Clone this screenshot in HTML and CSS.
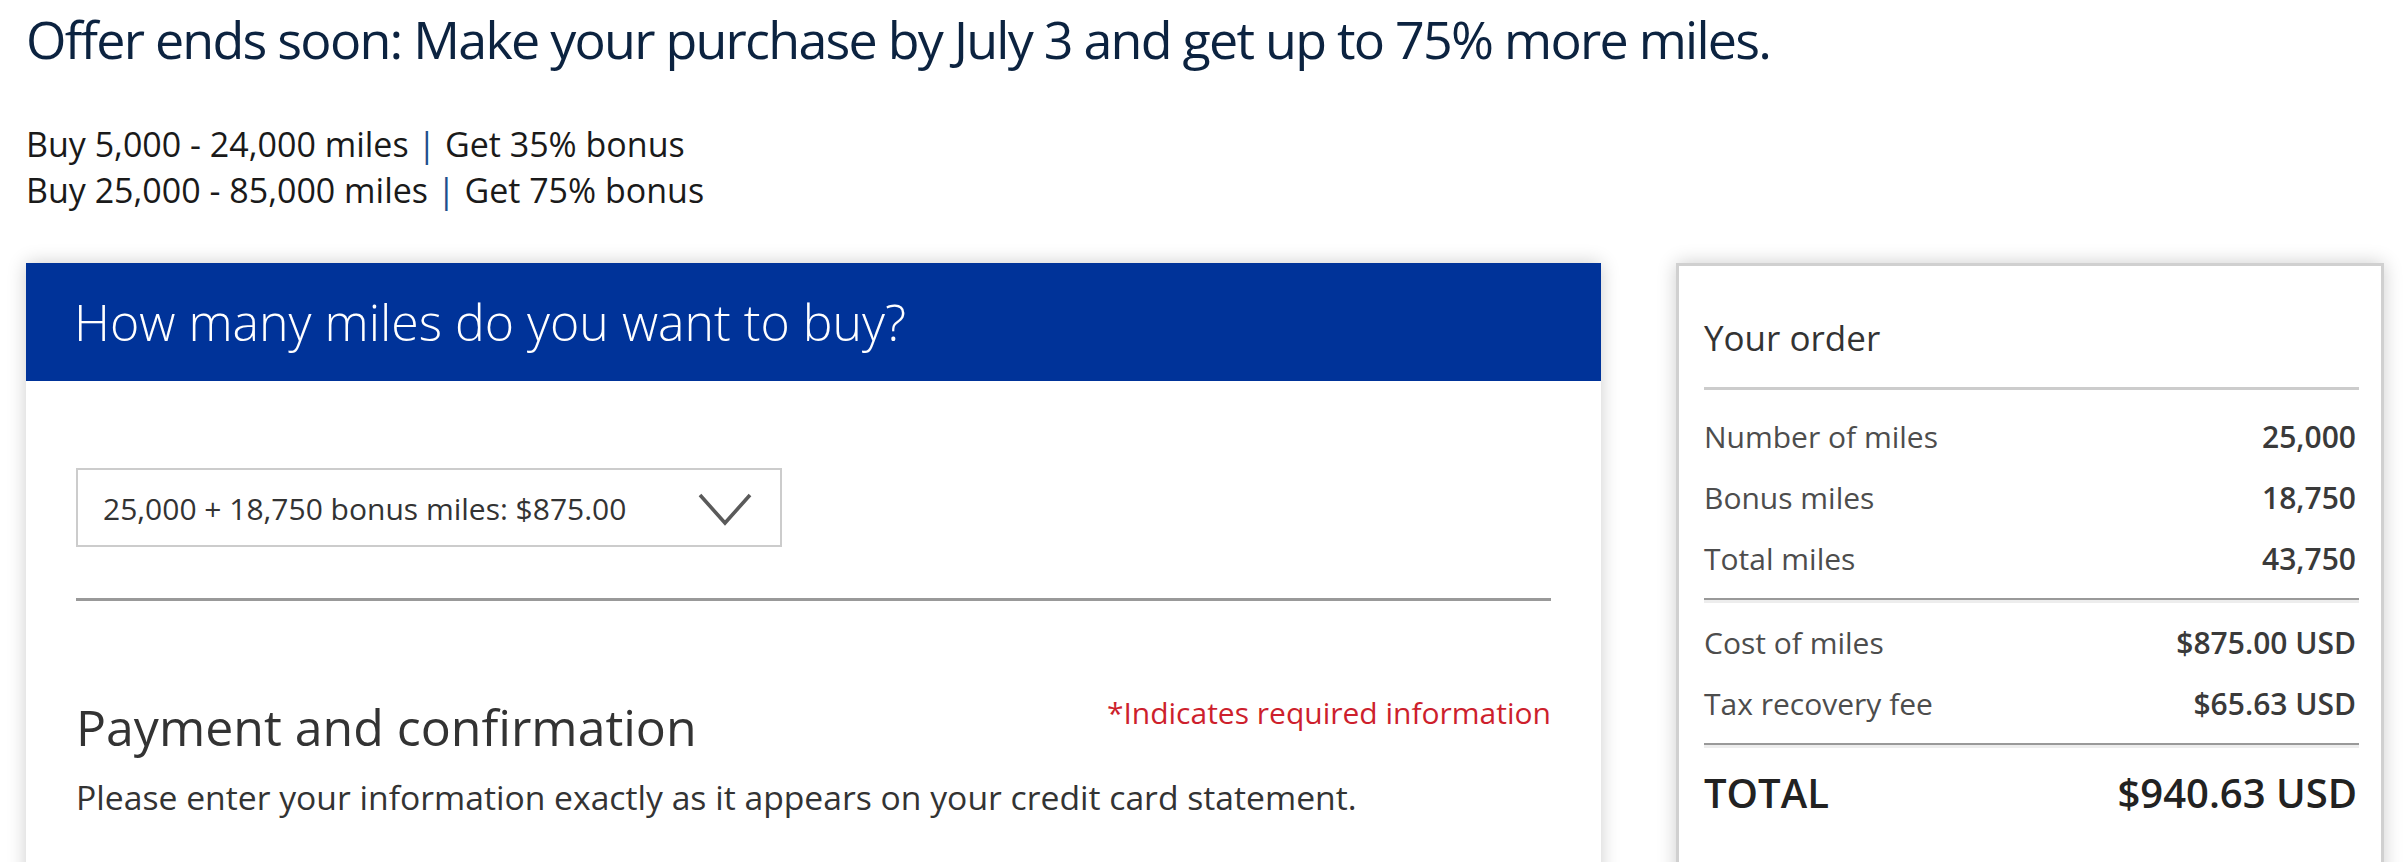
FILE: index.html
```html
<!DOCTYPE html>
<html lang="en">
<head>
<meta charset="utf-8">
<title>Buy miles</title>
<link rel="stylesheet" href="styles.css">
</head>
<body>
<div class="page">
  <h1 class="offer-title">Offer ends soon: Make your purchase by July 3 and get up to 75% more miles.</h1>
  <div class="tiers">
    <div class="tier">Buy 5,000 - 24,000 miles <span class="sep">|</span> Get 35% bonus</div>
    <div class="tier">Buy 25,000 - 85,000 miles <span class="sep">|</span> Get 75% bonus</div>
  </div>
  <div class="columns">
    <section class="main-card">
      <div class="card-header">How many miles do you want to buy?</div>
      <div class="card-body">
        <div class="select-box">
          <span class="select-text">25,000 + 18,750 bonus miles: $875.00</span>
          <svg class="chevron" width="54" height="33" viewBox="0 0 54 33"><polyline points="2,2 27,30 52,2" fill="none" stroke="#5a5a5a" stroke-width="3.6"/></svg>
        </div>
        <div class="rule"></div>
        <div class="payment-head">
          <h2 class="payment-title">Payment and confirmation</h2>
          <span class="required">*Indicates required information</span>
        </div>
        <p class="payment-note">Please enter your information exactly as it appears on your credit card statement.</p>
      </div>
    </section>
    <aside class="order-card">
      <div class="order-title">Your order</div>
      <div class="order-rule-light"></div>
      <div class="order-group first">
        <div class="order-row"><span class="lbl">Number of miles</span><span class="val">25,000</span></div>
        <div class="order-row"><span class="lbl">Bonus miles</span><span class="val">18,750</span></div>
        <div class="order-row"><span class="lbl">Total miles</span><span class="val">43,750</span></div>
      </div>
      <div class="order-rule"></div>
      <div class="order-group">
        <div class="order-row"><span class="lbl">Cost of miles</span><span class="val">$875.00 USD</span></div>
        <div class="order-row"><span class="lbl">Tax recovery fee</span><span class="val">$65.63 USD</span></div>
      </div>
      <div class="order-rule"></div>
      <div class="total-row"><span>TOTAL</span><span>$940.63 USD</span></div>
    </aside>
  </div>
</div>
</body>
</html>
```

FILE: styles.css
```css
* { box-sizing: border-box; }
html, body { margin: 0; padding: 0; background: #fff; }
body { font-family: "Open Sans", "Liberation Sans", sans-serif; color: #333; overflow: hidden; }

.page { padding: 0 22px 0 26px; }

.offer-title {
  margin: 7px 0 0 0;
  font-size: 52px;
  line-height: 64px;
  font-weight: 400;
  letter-spacing: -1.75px;
  color: #0c2340;
}

.tiers { margin-top: 50px; }
.tier {
  font-size: 34px;
  line-height: 46px;
  color: #1a1a1a;
}
.sep { color: #1f4f8c; }

.columns {
  display: flex;
  gap: 75px;
  margin-top: 50px;
  align-items: flex-start;
}

.main-card {
  flex: 1;
  background: #fff;
  box-shadow: 0 0 18px rgba(0,0,0,0.2);
  min-height: 700px;
}
.card-header {
  background: #003399;
  color: #fff;
  font-size: 50px;
  font-weight: 300;
  line-height: 118px;
  height: 118px;
  padding-left: 48px;
}
.card-body { padding: 87px 50px 40px 50px; }

.select-box {
  width: 706px;
  height: 79px;
  border: 2px solid #cccccc;
  display: flex;
  align-items: center;
  justify-content: space-between;
  padding: 0 28px 0 25px;
}
.select-text {
  font-size: 30px;
  color: #333;
  line-height: 40px;
  margin-top: 2px;
}
.chevron { display: block; margin-top: 4px; }

.rule {
  height: 3px;
  background: #999;
  margin-top: 51px;
}

.payment-head {
  display: flex;
  justify-content: space-between;
  align-items: flex-start;
  margin-top: 95px;
}
.payment-title {
  margin: 0;
  font-size: 50px;
  line-height: 62px;
  font-weight: 400;
  color: #333;
}
.required {
  font-size: 30px;
  line-height: 38px;
  color: #cd1f2d;
  margin-top: -2px;
}
.payment-note {
  margin: 19px 0 0 0;
  font-size: 33.7px;
  line-height: 40px;
  color: #333;
}

.order-card {
  width: 708px;
  border: 3px solid #d0d0d0;
  background: #fff;
  box-shadow: 0 0 18px rgba(0,0,0,0.2);
  padding: 49px 22px 0 25px;
  min-height: 700px;
}
.order-title {
  font-size: 35px;
  line-height: 46px;
  color: #333;
}
.order-rule-light {
  height: 3px;
  background: #cccccc;
  margin-top: 26px;
}
.order-rule {
  height: 5px;
  border-top: 2px solid #999;
  border-bottom: 3px solid #ededed;
  margin-top: 9px;
}
.order-group { margin-top: 9px; }
.order-group.first { margin-top: 16px; }
.order-row {
  display: flex;
  justify-content: space-between;
  font-size: 30px;
  line-height: 61px;
  padding-right: 3px;
}
.lbl { color: #4d4d4d; }
.val { color: #3a3a3a; font-weight: 600; }
.total-row {
  display: flex;
  justify-content: space-between;
  margin-top: 15px;
  font-size: 40px;
  line-height: 60px;
  font-weight: 600;
  color: #222;
  padding-right: 2px;
}
```
